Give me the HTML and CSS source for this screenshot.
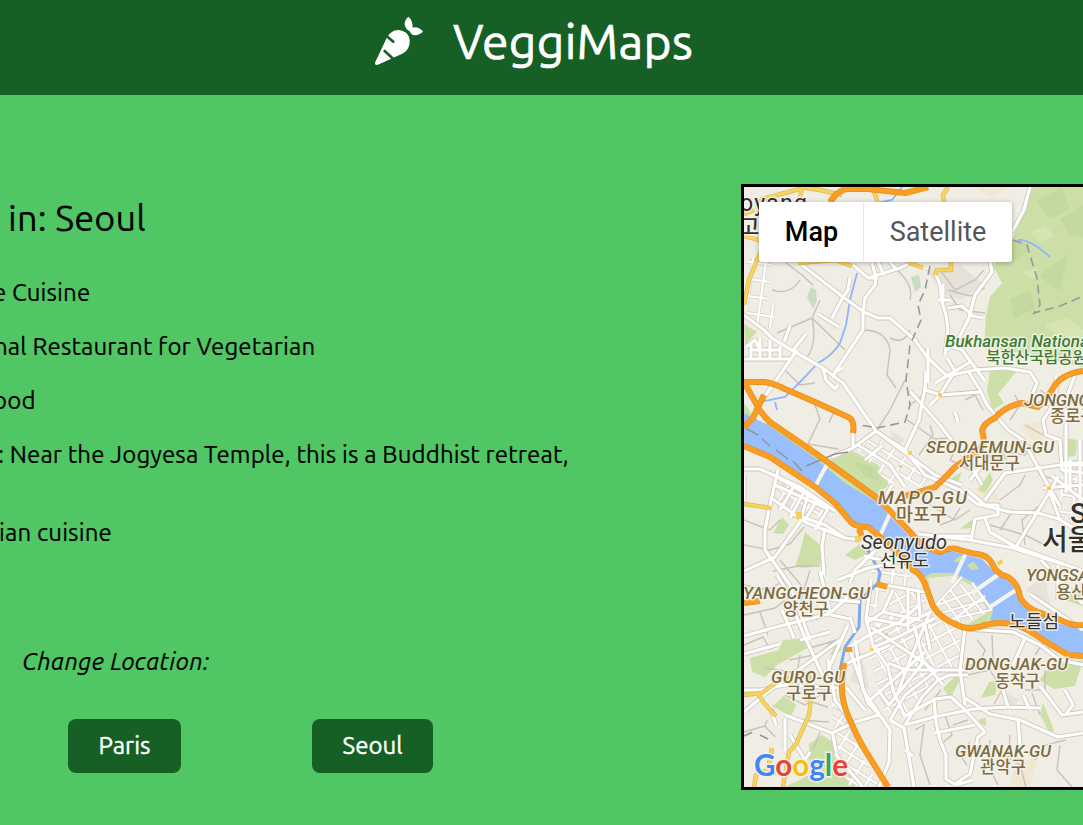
FILE: index.html
```html
<!DOCTYPE html>
<html lang="en">
<head>
<meta charset="utf-8">
<title>VeggiMaps</title>
<link rel="stylesheet" href="styles.css">
</head>
<body>
<header class="header">
  <svg class="carrot" viewBox="0 0 210 195" aria-hidden="true">
    <path d="M30 158 L65 84 Q78 60 100 60 Q134 64 134 95 Q134 117 115 130 L42 163 Q29 169 30 158Z" fill="#fff"/>
    <path d="M62 76L85 95M59 123L82 144" stroke="#176026" stroke-width="8" stroke-linecap="round"/>
    <path d="M130 20Q144 31 143 53Q157 47 174 64Q166 75 150 76Q139 76 134 64Q120 57 119 43Q119 30 130 20Z" fill="#fff"/>
  </svg>
  <h1 class="brand">VeggiMaps</h1>
</header>
<main class="main">
  <section class="places">
    <h2 class="title">in: Seoul</h2>
    <ul class="list">
      <li class="l1">e Cuisine</li>
      <li class="l2">nal Restaurant for Vegetarian</li>
      <li class="l3">ood</li>
      <li class="l4">: Near the Jogyesa Temple, this is a Buddhist retreat,</li>
      <li class="l5">ian cuisine</li>
    </ul>
    <p class="change">Change Location:</p>
    <div class="buttons">
      <button class="btn paris"><span>Paris</span></button>
      <button class="btn seoul"><span>Seoul</span></button>
    </div>
  </section>
  <section class="map">
    <svg class="canvas" viewBox="744 187 339 600">
      <defs>
        <pattern id="gridA" width="13" height="17" patternUnits="userSpaceOnUse" patternTransform="rotate(8)"><path d="M0 2H13M2 0V17" stroke="#d0c9be" stroke-width="4"/><path d="M0 2H13M2 0V17" stroke="#fff" stroke-width="2.6"/></pattern>
        <pattern id="gridB" width="14" height="11" patternUnits="userSpaceOnUse" patternTransform="rotate(32)"><path d="M0 2H14M2 0V11" stroke="#d0c9be" stroke-width="4"/><path d="M0 2H14M2 0V11" stroke="#fff" stroke-width="2.6"/></pattern>
        <pattern id="gridC" width="15" height="13" patternUnits="userSpaceOnUse" patternTransform="rotate(-28)"><path d="M0 2H15M2 0V13" stroke="#d0c9be" stroke-width="4"/><path d="M0 2H15M2 0V13" stroke="#fff" stroke-width="2.6"/></pattern>
        <g id="roads">
          <path d="M802 265L843 297L864 312L878 318L890 318L915 340L927 357L947 376M1030 187L1024 210L1012 232M863 330V312L865 298L875 285L876 278L868 278M863 330L835 372L833 378M852 264L868 278L900 268L910 263M876 278L872 262M850 278L848 290L843 297L832 318M818 314L839 327M990 262L992 272L975 295L969 318L958 340L947 350M884 275L878 262M896 269L890 262"/>
          <path d="M935 272L940 285L942 302L946 315L948 330L945 355M938 300H950M943 284V302M948 308L962 306L973 316L983 318M948 345L962 350L985 381M928 348V383M947 376L975 370L1005 368L1030 372L1037 383L1033 393M955 371L947 358M935 383L947 376L970 362"/>
          <path d="M744 315L764 330L773 339L795 352L823 368L843 383L876 431L915 460L935 475L962 485M823 368L826 380L835 389L838 385M835 372L843 368M806 334L793 350M790 326L784 342M797 350L775 382L755 410"/>
          <path d="M744 359H792M746 347L755 340L760 350M751 343V360M760 338V360M770 340V360M780 346V360M750 350H780"/>
          <path d="M876 431L853 448L832 457M778 470L770 505L765 530L765 550L790 585L810 640M744 469H760L780 478L800 487L835 511M808 495L800 522L775 557L744 571M775 485L828 509M770 497L805 522L845 538M744 475V500M779 478L827 506M793 488L780 510M805 490L790 518M817 500L804 522M828 509L815 530"/>
          <path d="M796 515L825 525L845 538L861 540M825 528L822 546L824 575M900 562L868 568L838 580M876 550L855 570L850 583M864 556L895 563M874 430L905 450L925 475L960 490L977 504L1010 512L1038 513L1062 520M858 445L890 465L905 487M892 485L881 505M882 446L865 460M853 433V448"/>
          <path d="M910 391L940 425L972 467L982 485M925 388L919 420L905 450M926 371L925 390L941 395L980 392M955 371L940 395L930 405M968 371L980 390L987 405L1008 430L1023 440L1050 489L1060 506M985 500L1005 473L1060 465H1083M967 490L985 505L998 505V515L975 519L971 541M1058 477L1049 493L1014 550M985 518L990 532L1014 546M1049 490L1060 520L1083 533M955 412L958 422M980 467L970 480"/>
          <path d="M1056 375V400L1043 420L1046 435L1060 440L1062 470L1083 473M1066 410L1066 492M1062 463H1083M1070 460V490M1080 440V515M1043 488L1083 485M1052 476L1083 500M1075 375L1060 415"/>
          <path d="M919 534L970 540L1013 548L1065 565M933 546L935 536L971 536M1014 546L1083 571M1083 630L1030 594M1058 565V600M1041 560L1083 604"/>
          <path d="M744 636L780 626L829 614L850 595M777 575L786 590L803 633L823 676L841 685M744 690H760L785 685L838 688M744 712L765 694L840 640M820 605L832 615L850 619M792 589L835 600L860 602M782 610L794 638M744 654L780 644M830 632L800 640M820 571L830 612M848 625L828 670"/>
          <path d="M785 715L832 733L855 722L879 715M832 731L837 756L863 787M770 705L776 725M855 640L863 690L890 730L889 762L879 787M828 660L835 700L850 720M785 718V750M790 735L805 760L810 752M845 686L865 710"/>
          <path d="M871 580L866 619L873 645L888 667L893 690L905 717M849 647L871 634L900 622L919 605M871 627L905 650L937 672M893 590L883 612L868 622M883 612L920 620M908 588V630M918 590L920 616M930 612L910 660L895 700M888 663L906 670H968M868 618L905 625L930 612M872 648L900 636L935 618M850 650L868 703L884 720M843 665L890 645M884 585L925 592"/>
          <path d="M905 716L935 699L951 697L965 710L985 732M905 725L934 717L974 709L1008 707L1040 708M965 698L990 714L1020 720L1058 737L1083 733M934 700L936 722L940 740L946 755L946 779L956 785M953 785L970 774L978 737L985 732M905 725L922 697L938 680L950 675H968M965 628L960 670L965 705M965 629L1013 632L1040 645L1060 660L1083 665M1025 638L1013 665M1003 690L1008 707M1040 686L1062 715L1083 712M1065 690L1073 705L1065 715M1023 695L1030 710"/>
          <path d="M937 670L905 695L890 720M890 720L904 728L914 787M914 625L923 660L943 685M925 625L930 650M878 690L889 705L925 660M870 700L925 652M850 617L855 633M905 750L913 756M956 785L973 780M1018 720L1020 745M935 733L975 725"/>
        </g>
        <g id="island"><path d="M935 606L978 590M938 614L985 600M946 620L991 610M942 597L960 622M950 590L973 620M960 584L984 614M972 583L992 610M935 606L962 577M950 622L985 596"/></g>
        <g id="orange">
          <path d="M830 202Q840 187 852 189L868 189L905 193L928 187M744 382H764Q773 383 785 389L815 402L848 417Q855 420 853 433M744 382L758 407Q762 415 770 422L818 455L877 498L892 513L912 534Q924 549 940 552Q952 546 960 550Q970 553 982 555Q990 557 995 569Q1000 575 1008 577Q1018 583 1020 597Q1025 607 1038 612L1068 623Q1074 626 1083 625M764 395L753 418L744 427M744 446L770 457L815 487L835 503L850 521Q854 527 868 527L880 537L902 557L913 570Q922 574 926 587L933 606Q940 618 955 624Q970 632 985 625Q1008 619 1028 630L1048 643L1068 655L1083 656M905 496L935 487Q945 478 955 467L980 450Q986 442 982 430Q984 423 995 418Q1005 406 1022 403L1038 407Q1048 397 1052 390Q1060 374 1083 371M844 663L842 683Q841 702 850 720Q857 737 865 750L888 787"/>
          <path d="M877 584L887 587M744 603L760 601M849 647V652M859 529L863 539"/>
        </g>
        <g id="yellow">
          <path d="M744 214L754 210M744 236L766 242L757 260L749 280L744 305M757 207L762 199L807 187M799 202L802 187L820 190L842 195M873 189L878 203M948 187L943 195L944 203M798 263L835 260L852 266M908 262L923 268M951 252V270L937 270L935 275M744 504L770 508"/>
          <path d="M744 695L762 693L780 680L800 676M757 692L764 703L776 716M808 673Q812 700 809 715L796 744L789 752L783 787M772 748L768 770L756 775L754 787"/>
        </g>
      </defs>
      <rect x="744" y="187" width="339" height="600" fill="#f0ede4"/>
      <path d="M925 270L960 265L985 285L960 300L947 295ZM890 430L905 440L895 450ZM840 690L860 740L850 745ZM860 650L870 690L850 680ZM1000 690L1020 700L1010 707ZM1025 590L1045 575L1050 605ZM780 480L815 500L805 515L785 505Z" fill="#e7e2d9"/>
      <path d="M975 187H1010L990 197ZM1020 425L1045 420L1040 450ZM975 488L990 482L1000 500L980 505ZM1013 768L1038 755L1030 787H1010Z" fill="#f1e8d2"/>
      <g fill="#cbdfa7">
        <path d="M1030 187L1022 215L1013 238L993 266L1002 283L990 297L986 316L984 347L1015 352L1083 367V187ZM990 371H1017L998 394L1004 403L992 410L987 390Z"/>
        <path d="M744 403L758 422L772 424L815 450L875 493L890 511L861 495L844 486L806 455L770 427L744 415ZM829 459L853 451L878 465L890 484L876 496ZM744 324L757 332L745 345Z"/>
        <path d="M750 658L779 650L783 640L807 638L809 647L777 665L765 677L752 672ZM773 706L784 696L796 704L791 717ZM805 532L800 552L795 567L807 568L821 564L820 545ZM773 533L782 517L789 525L783 534ZM845 555L860 544L872 552L855 560ZM829 656L838 641L842 650ZM809 744L822 735L836 744L840 760L855 775L855 787H785L809 775Z"/>
        <path d="M943 688L958 674L960 680L950 698ZM981 698L989 682L998 680L995 695ZM979 719L986 718V726L979 723ZM1039 680L1052 665L1083 660L1075 686L1054 689ZM1040 714L1043 703L1054 730L1050 734ZM1058 598L1065 590H1083V606ZM960 529L971 520L974 528ZM978 490L990 472L993 480L985 493ZM1065 438L1077 440L1076 455L1066 458ZM985 455L1002 450L1008 459L995 462ZM948 480L962 472L958 482Z"/>
      </g>
      <path d="M811 287L816 290L817 301L813 309L807 297ZM911 277L919 275L921 287L915 292Z" fill="#c6dec5"/>
      <path d="M1036 202L1062 187L1070 210L1050 218ZM1002 246L1020 239L1030 250L1012 262ZM1040 275L1068 255L1060 290L1050 285ZM1010 300L1030 290L1035 308L1014 319ZM1060 220L1083 205V238L1069 234ZM853 461L871 466L882 482L866 477Z" fill="#bcd497" opacity=".5"/>
      <path d="M1030 232L1045 226L1055 236L1040 242ZM1022 272L1040 267L1032 280ZM1045 325L1067 318L1083 330V338L1055 335Z" fill="#dae6b6" opacity=".8"/>
      <path d="M747 258H772L767 308L747 304ZM746 305H775V325L766 330L748 320Z" fill="url(#gridA)"/>
      <path d="M852 443L870 433L932 475L925 490L905 478L890 485Z" fill="url(#gridB)"/>
      <path d="M776 478L817 500L835 520L790 512L772 503Z" fill="url(#gridB)"/>
      <path d="M868 650L880 610L895 590L918 585L934 617L965 633L960 665L930 690L905 717L884 710Z" fill="url(#gridC)"/>
      <path d="M832 690L848 726L860 752L880 787H850L832 752Z" fill="url(#gridB)"/>
      <path d="M898 560L920 590L890 585L867 620L872 570Z" fill="url(#gridA)"/>
      <path d="M1062 460H1083V520H1060Z" fill="url(#gridA)"/>
      <g fill="none" stroke="#c9c2b8" stroke-width="1.4">
        <path d="M785 262L802 275L813 285M772 290Q790 296 800 280M812 318L777 333M812 318Q818 345 805 360M820 300L812 318L845 350M863 330Q887 330 890 350L887 375L896 388M897 270Q914 285 910 300M910 330Q904 345 890 338M905 380L890 410L877 430M815 405L820 419L808 444L838 449M835 409L829 423M785 370L800 385L815 383"/>
        <path d="M940 270L955 290L975 280L984 270M948 290L970 296L985 288M950 295L960 310L985 313M910 405L930 390M907 420L935 439L952 438M919 455L933 435L930 425M970 470L950 460L960 440M983 410L975 395L965 400M1010 420L1020 405L1015 395M990 450L1025 455L1030 445M1030 455L1040 475L1058 480M980 470L1005 450M1000 500L1020 485L1025 475M990 525L1025 535L1045 545M930 505L955 520L970 510M1010 515L1000 530M1040 390L1070 410M1043 435L1025 425M940 525L953 520L960 508M1040 505L1022 520L1025 545"/>
        <path d="M744 520L770 530L780 520M744 545L770 550L790 544L804 527M773 571L798 566L820 566M780 560L805 590M744 585L768 590L785 580M744 615L775 608L785 600M744 645L763 637L770 650M760 612L768 635M810 648L837 640M810 570L801 600L818 620M789 660L819 654L832 642M765 668L797 673L800 655M744 732L765 726L775 737M765 726L767 720M805 700L828 707M800 720L829 722M785 695L805 705L820 695M800 760L815 766L840 761M820 732L813 750M785 760L775 775"/>
        <path d="M977 640L985 650L979 665L965 665M992 635L993 660L1005 670M1035 655L1045 640L1055 660M967 675L990 670L1002 690L994 704M1045 670L1045 690L1025 690M1032 693L1040 715M945 715L952 735L940 745M970 742L960 755L967 765M990 740L988 765L998 785M1010 735L1008 765M1035 760L1045 745L1066 740M915 730L924 725L920 755L930 785M1060 745L1057 770L1072 787M941 690L925 710M968 720L953 725M1004 755L1020 765L1026 787"/>
      </g>
      <path d="M857 273L850 300L846 325L840 343Q832 356 818 363L802 380L785 397L760 402M877 203L892 200L902 187M1018 240Q1030 239 1050 257M775 402L777 410" fill="none" stroke="#8fb5fa" stroke-width="1.8"/>
      <path d="M744 413L768 425L815 458L845 483L878 503L908 535L925 550L955 552L982 559L998 575L1012 583L1022 605L1052 622L1083 629V657L1055 647L1022 630L992 622L960 583L925 577L912 570L902 560L868 530L848 520L815 488L770 457L744 446Z" fill="#9abffd"/>
      <path d="M953 561L960 556L964 556L961 563ZM967 565L974 562L979 569L971 570Z" fill="#cbdfa7"/>
      <path d="M926 576L932 573L952 573L975 583L993 612L990 620L965 629L945 619L932 604Z" fill="#cbdfa7"/>
      <path d="M928 578L952 576L973 586L989 612L965 626L945 617L933 603Z" fill="#ede8df"/>
      <path d="M868 550L880 573L878 583L860 600L859 627L845 647L840 670" fill="none" stroke="#7da9ed" stroke-width="3"/>
      <g fill="none" stroke-linejoin="round">
        <use href="#roads" stroke="#cec6ba" stroke-width="4.8"/><use href="#roads" stroke="#fff" stroke-width="3.2"/>
        <use href="#island" stroke="#cec6ba" stroke-width="3.4"/><use href="#island" stroke="#fff" stroke-width="2.2"/>
      </g>
      <path d="M830 459L812 492M891 511L880 536M967 551L952 583M1002 572L972 593M1016 590L990 607" fill="none" stroke="#f5f3ed" stroke-width="4"/>
      <path d="M747 429L758 435M762 439L770 446M776 450L788 459M793 461L802 471M806 466L835 454L848 452" fill="none" stroke="#929398" stroke-width="1.5"/>
      <path d="M930 266L925 290L918 305L921 320L910 345L906 380L910 405L905 422L877 428L860 425M1013 240L1027 245L1037 278L1040 305L1034 313L1060 306L1083 296M744 736L757 730M760 735L770 740" fill="none" stroke="#999" stroke-width="1.6" stroke-dasharray="9 5"/>
      <g fill="none"><use href="#yellow" stroke="#d9b657" stroke-width="4.4"/><use href="#yellow" stroke="#f8d35e" stroke-width="3.2"/></g>
      <g fill="none" stroke-linejoin="round"><use href="#orange" stroke="#e78e1b" stroke-width="6"/><use href="#orange" stroke="#f99e23" stroke-width="4.6"/></g>
      <path d="M796 512h6v7h-6zM767 506h4v4h-4zM855 536h7v5h-7zM938 393h4v4h-4zM908 451h4v4h-4zM1047 486h4v4h-4zM997 562l5-3 1 4-5 3zM885 633h3v3h-3zM870 648h3v3h-3zM899 465h3v3h-3z" fill="#f7ce5b"/>
      <g class="labels">
        <g class="city"><text x="740" y="211" textLength="67">oyang</text><text class="ko" x="740" y="234">고양</text></g>
        <g class="park"><text x="945" y="347" textLength="148">Bukhansan National</text><text class="ko" x="986" y="363" textLength="101">북한산국립공원</text></g>
        <g class="district">
          <text x="1024" y="406" textLength="93">JONGNO-GU</text><text class="ko" x="1050" y="422">종로구</text>
          <text x="926" y="453" textLength="128">SEODAEMUN-GU</text><text class="ko" x="959" y="469" textLength="61">서대문구</text>
          <text class="wide" x="878" y="504" textLength="89">MAPO-GU</text><text class="ko wide" x="896" y="521" textLength="51">마포구</text>
          <text x="1026" y="581" textLength="101">YONGSAN-GU</text><text class="ko" x="1056" y="598">용산구</text>
          <text x="743" y="599" textLength="127">YANGCHEON-GU</text><text class="ko" x="783" y="615" textLength="46">양천구</text>
          <text x="771" y="683" textLength="74">GURO-GU</text><text class="ko" x="786" y="699" textLength="46">구로구</text>
          <text x="965" y="670" textLength="103">DONGJAK-GU</text><text class="ko" x="995" y="687" textLength="45">동작구</text>
          <text x="955" y="757" textLength="96">GWANAK-GU</text><text class="ko" x="980" y="773" textLength="46">관악구</text>
        </g>
        <g class="place"><text x="861" y="549" textLength="86">Seonyudo</text><text class="ko" x="880" y="567" textLength="49">선유도</text><text class="ko" x="1009" y="628" textLength="50">노들섬</text></g>
        <g class="seoul-label"><text x="1070" y="523">Seoul</text><text class="ko" x="1042" y="550">서울</text></g>
      </g>
      <text class="google" x="754" y="776" textLength="94" lengthAdjust="spacingAndGlyphs"><tspan fill="#4285f4">G</tspan><tspan fill="#ea4335">o</tspan><tspan fill="#fbbc05">o</tspan><tspan fill="#4285f4">g</tspan><tspan fill="#34a853">l</tspan><tspan fill="#ea4335">e</tspan></text>
    </svg>
    <div class="types"><div class="type active">Map</div><div class="type">Satellite</div></div>
  </section>
</main>
</body>
</html>
```
FILE: styles.css
```css
* { box-sizing: border-box; }
body { margin: 0; width: 1083px; height: 825px; overflow: hidden; background: #50c664; color: #000; font-family: Ubuntu, "Noto Sans", sans-serif; }
.header { height: 95px; background: #166025; display: flex; align-items: flex-start; padding: 10px 0 0 365px; }
.carrot { width: 70px; height: 65px; flex: none; }
.brand { margin: -2px 0 0 18px; font-size: 48px; line-height: 66px; font-weight: 400; color: #fff; white-space: nowrap; letter-spacing: .3px; -webkit-text-stroke: .7px #fff; }
.main { display: flex; height: 730px; padding-top: 89px; }
.places { width: 741px; flex: none; white-space: nowrap; overflow: hidden; -webkit-text-stroke: .2px; }
.title { margin: 9px 0 0 8px; font-size: 36px; line-height: 50px; font-weight: 400; letter-spacing: .2px; }
.list { margin: 33px 0 0; padding: 0; list-style: none; font-size: 24px; line-height: 34px; letter-spacing: .15px; }
.list li { height: 34px; margin-bottom: 20px; }
.list .l1 { margin-left: -7px; }
.list .l2 { margin-left: -6px; }
.list .l3 { margin-left: -7px; }
.list .l4 { margin-left: -2px; margin-bottom: 44px; }
.list .l5 { margin-left: -1px; }
.change { margin: 95px 0 0 22px; font-size: 24px; line-height: 34px; font-style: italic; letter-spacing: .4px; }
.buttons { margin-top: 40px; padding-left: 68px; display: flex; gap: 131px; }
.btn { height: 54px; border: 0; border-radius: 8px; padding: 0 0 2px; background: #166025; color: #fff; font: 24px Ubuntu, "Noto Sans", sans-serif; -webkit-text-stroke: .4px #fff; }
.paris { width: 113px; }
.seoul { width: 121px; }
.map { position: relative; flex: none; width: 345px; height: 606px; border: 3px solid #000; }
.canvas { display: block; width: 339px; height: 600px; }
.types { position: absolute; left: 15px; top: 15px; display: flex; height: 60px; font: 27px/60px Roboto, sans-serif; background: #fff; border-radius: 3px; box-shadow: 0 1px 5px rgba(0,0,0,.3); }
.type { width: 148px; text-align: center; color: #565656; }
.type.active { width: 105px; padding-left: 1px; color: #000; font-weight: 500; border-right: 1px solid #e6e6e6; }
.labels text { font-family: Roboto, sans-serif; paint-order: stroke; stroke: rgba(245,243,235,.85); stroke-width: 3px; stroke-linejoin: round; }
.labels text.ko { font-family: "Noto Sans CJK KR", sans-serif; font-style: normal; font-weight: 500; }
.district { fill: #7d6b43; font-size: 17px; font-style: italic; font-weight: 500; }
.district .ko { font-size: 16.5px; }
.district .wide { font-size: 18.5px; }
.park { fill: #3f7d30; font-size: 17px; font-style: italic; font-weight: 500; }
.park .ko { font-size: 16px; }
.place { fill: #333; font-size: 20px; font-style: italic; }
.labels .place .ko { font-size: 18px; font-weight: 400; }
.city { fill: #302f2a; font-size: 23px; }
.city .ko { font-size: 21px; }
.seoul-label { fill: #302f2a; font-size: 28px; font-weight: 500; }
.google { font: 700 31px Lato, sans-serif; paint-order: stroke; stroke: #f4f2ec; stroke-width: 3px; }
```
